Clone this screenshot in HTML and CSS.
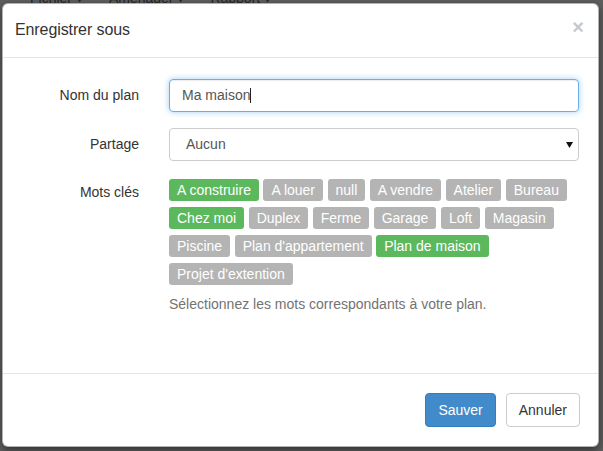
FILE: index.html
```html
<!DOCTYPE html>
<html lang="fr">
<head>
  <meta charset="UTF-8">
  <meta name="viewport" content="width=device-width, initial-scale=1.0">
  <title>Enregistrer sous</title>
  <link rel="stylesheet" href="styles.css">
</head>
<body>
  <!-- page behind the backdrop, mostly hidden by the dialog -->
  <div class="menubar">
    <span>Fichier ▾</span>
    <span>Aménager ▾</span>
    <span>Rapport ▾</span>
  </div>

  <div class="modal">
    <div class="modal-header">
      <h4 class="modal-title">Enregistrer sous</h4>
      <span class="close">×</span>
    </div>

    <form class="modal-body">
      <label class="control-label">Nom du plan</label>
      <div class="form-control focus">Ma maison<span class="cursor"></span></div>

      <label class="control-label shift">Partage</label>
      <div class="form-control select shift">
        <span>Aucun</span>
        <svg width="7" height="6" viewBox="0 0 7 6"><path d="M0 0h7L3.5 6z" fill="#111"/></svg>
      </div>

      <label class="control-label tags-label">Mots clés</label>
      <div class="tags-box">
        <div class="tags">
          <span class="tag on">A construire</span>
          <span class="tag">A louer</span>
          <span class="tag">null</span>
          <span class="tag">A vendre</span>
          <span class="tag">Atelier</span>
          <span class="tag">Bureau</span>
          <span class="tag on">Chez moi</span>
          <span class="tag">Duplex</span>
          <span class="tag">Ferme</span>
          <span class="tag">Garage</span>
          <span class="tag">Loft</span>
          <span class="tag">Magasin</span>
          <span class="tag">Piscine</span>
          <span class="tag">Plan d'appartement</span>
          <span class="tag on">Plan de maison</span>
          <span class="tag">Projet d'extention</span>
        </div>
        <p class="help-block">Sélectionnez les mots correspondants à votre plan.</p>
      </div>
    </form>

    <div class="modal-footer">
      <button type="button" class="btn btn-primary">Sauver</button>
      <button type="button" class="btn btn-default">Annuler</button>
    </div>
  </div>
</body>
</html>
```

FILE: styles.css
```css
body {
  font-family: "Liberation Sans", Arial, sans-serif;
  font-size: 14px;
  color: #333;
  background-color: #5f5f5f;
  margin: 0;
  padding: 0;
  height: 451px;
  overflow: hidden;
}

.menubar {
  margin-top: -12px;
  padding-left: 30px;
  height: 20px;
  line-height: 20px;
  color: #262626;
  display: flex;
  gap: 26px;
}

.modal {
  position: absolute;
  top: 3px;
  left: 2px;
  width: 595px;
  height: 442px;
  background-color: #fff;
  border: 1px solid rgba(0, 0, 0, 0.3);
  border-radius: 6px;
  box-shadow: 0 3px 9px rgba(0, 0, 0, 0.5);
  display: flex;
  flex-direction: column;
}

.modal-header {
  height: 54px;
  padding: 0 14px 2px 12px;
  box-sizing: border-box;
  border-bottom: 1px solid #e5e5e5;
  display: flex;
  align-items: center;
  justify-content: space-between;
}

.modal-title {
  margin: 0;
  font-size: 16px;
  font-weight: normal;
  letter-spacing: -0.1px;
  line-height: 20px;
  color: #333;
}

.close {
  font-size: 20px;
  font-weight: bold;
  line-height: 20px;
  color: #c8c8c8;
  margin-top: -6px;
}

.modal-body {
  flex: 1;
  margin: 0;
  padding: 21px 19px 0 15px;
  display: grid;
  grid-template-columns: 121px 1fr;
  grid-auto-rows: min-content;
  column-gap: 30px;
  row-gap: 15px;
}

.control-label {
  text-align: right;
  line-height: 33px;
}

.shift {
  margin-top: 1px;
  margin-bottom: -1px;
}

.tags-label {
  line-height: 20px;
  padding-top: 7px;
}

.form-control {
  height: 33px;
  box-sizing: border-box;
  border: 1px solid #ccc;
  border-radius: 4px;
  padding: 0 12px;
  line-height: 31px;
  color: #555;
}

.focus {
  border-color: #66afe9;
  box-shadow: inset 0 1px 1px rgba(0, 0, 0, 0.075), 0 0 6px rgba(102, 175, 233, 0.6);
}

.cursor {
  display: inline-block;
  width: 1px;
  height: 15px;
  background-color: #222;
  vertical-align: -3px;
}

.select {
  display: flex;
  align-items: center;
  justify-content: space-between;
  padding: 0 5px 0 16px;
}

.tags-box {
  padding-top: 4px;
}

.tags {
  display: flex;
  flex-wrap: wrap;
  gap: 6px 4.5px;
}

.tag {
  height: 22px;
  line-height: 22px;
  padding: 0 8px;
  border-radius: 3px;
  background-color: #b4b4b4;
  color: #fff;
  white-space: nowrap;
}

.tag.on {
  background-color: #5cb85c;
}

.help-block {
  margin: 9px 0 0;
  line-height: 20px;
  color: #737373;
}

.modal-footer {
  border-top: 1px solid #e5e5e5;
  padding: 19px 18px 19px 0;
  display: flex;
  justify-content: flex-end;
  gap: 10px;
}

.btn {
  font-family: inherit;
  font-size: 14px;
  height: 34px;
  padding: 0 12px;
  border: 1px solid transparent;
  border-radius: 4px;
  cursor: pointer;
}

.btn-primary {
  background-color: #428bca;
  border-color: #357ebd;
  color: #fff;
}

.btn-default {
  background-color: #fff;
  border-color: #ccc;
  color: #333;
}
```
